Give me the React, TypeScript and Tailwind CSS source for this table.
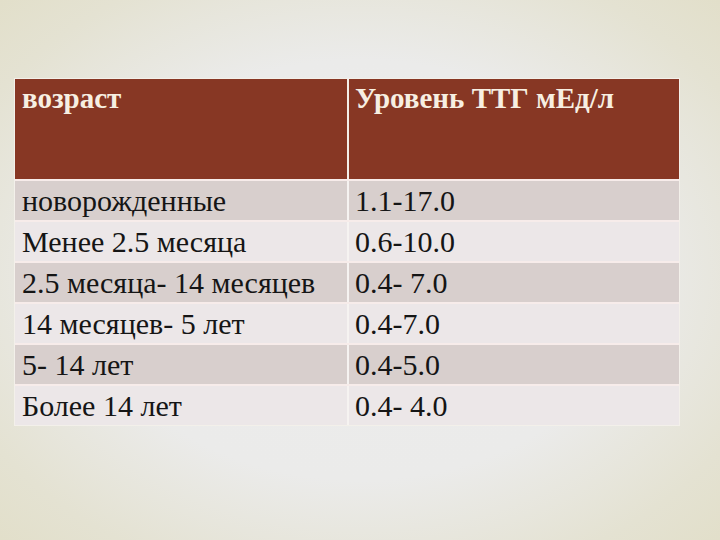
const rows = [
  ["новорожденные", "1.1-17.0"],
  ["Менее 2.5 месяца", "0.6-10.0"],
  ["2.5 месяца- 14 месяцев", "0.4- 7.0"],
  ["14 месяцев- 5 лет", "0.4-7.0"],
  ["5- 14 лет", "0.4-5.0"],
  ["Более 14 лет", "0.4- 4.0"],
];

export default function App() {
  return (
    <div className="w-[720px] h-[540px] overflow-hidden bg-[radial-gradient(ellipse_at_center,#ececec_0%,#ebebea_55%,#e4e2d2_85%,#e2dfca_100%)] pt-[78px] pl-[14px] font-['Liberation_Serif']">
      <div className="w-[666px] border border-[#f3f0ea] bg-white">
        <div className="grid grid-cols-[332px_1fr] gap-x-[2px] h-[100px] bg-[#f3efe9]">
          <div className="bg-[#873724] px-[7px] pt-[3px] text-[29px] font-bold text-[#f7efe2] leading-[32px]">
            возраст
          </div>
          <div className="bg-[#873724] px-[6px] pt-[3px] text-[29px] font-bold text-[#f7efe2] leading-[32px]">
            Уровень ТТГ мЕд/л
          </div>
        </div>
        <div className="flex flex-col gap-y-[2px] pt-[2px] bg-[#f7ecea]">
          {rows.map((r, i) => (
            <div
              key={i}
              className="grid grid-cols-[332px_1fr] gap-x-[2px] h-[39px] bg-[#f6f3f1]"
            >
              <div
                className={`px-[7px] flex items-center text-[30px] leading-[34px] text-[#151515] ${i % 2 === 0 ? "bg-[#d8cfcd]" : "bg-[#ece7e8]"}`}
              >
                {r[0]}
              </div>
              <div
                className={`px-[6px] flex items-center text-[30px] leading-[34px] text-[#151515] ${i % 2 === 0 ? "bg-[#d8cfcd]" : "bg-[#ece7e8]"}`}
              >
                {r[1]}
              </div>
            </div>
          ))}
        </div>
      </div>
    </div>
  );
}
